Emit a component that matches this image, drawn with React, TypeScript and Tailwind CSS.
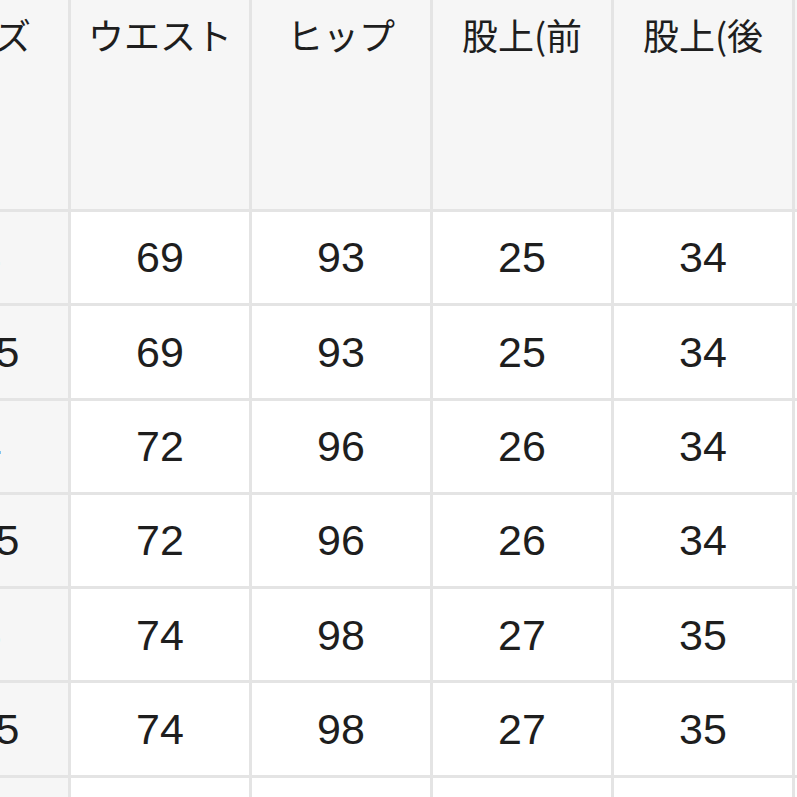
const headers = ['サイズ', 'ウエスト', 'ヒップ', '股上(前', '股上(後', '']

const rows: string[][] = [
  ['23', '69', '93', '25', '34', ''],
  ['23.5', '69', '93', '25', '34', ''],
  ['24', '72', '96', '26', '34', ''],
  ['24.5', '72', '96', '26', '34', ''],
  ['25', '74', '98', '27', '35', ''],
  ['25.5', '74', '98', '27', '35', ''],
  ['26', '', '', '', '', ''],
]

export default function App() {
  return (
    <div className="h-[797px] w-[797px] overflow-hidden bg-white">
      <div
        className="ml-[-113px] grid w-max grid-cols-[181px_178px_178px_178px_178px_178px] gap-[3px] bg-[#e4e4e4] text-[#1e1e1e]"
        style={{ fontFamily: '"Liberation Sans", "Noto Sans CJK JP", sans-serif' }}
      >
        {headers.map((h, i) => (
          <div
            key={i}
            className="h-[209px] bg-[#f6f6f6] pt-[13px] text-center text-[36px] leading-[1.2]"
            style={{ fontFamily: '"Noto Sans CJK JP", sans-serif' }}
          >
            {h}
          </div>
        ))}
        {rows.map((row, r) =>
          row.map((cell, c) => (
            <div
              key={`${r}-${c}`}
              className={`flex h-[91.3px] items-center justify-center text-[43px] ${
                c === 0 ? 'bg-[#f6f6f6]' : 'bg-white'
              }`}
            >
              {cell}
            </div>
          )),
        )}
      </div>
    </div>
  )
}
